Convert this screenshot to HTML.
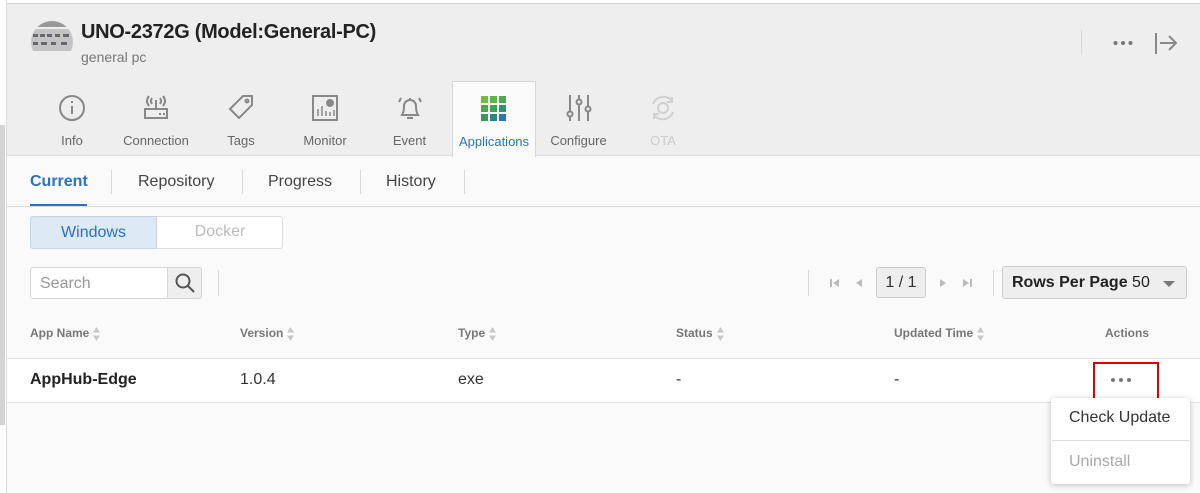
<!DOCTYPE html>
<html><head><meta charset="utf-8"><style>
*{box-sizing:border-box;margin:0;padding:0}
body{width:1200px;height:493px;overflow:hidden;font-family:"Liberation Sans",Arial,sans-serif;background:#fafafa;position:relative;color:#333}
.abs{position:absolute}
.left{left:0;top:0;width:7px;height:493px;background:#fff;border-right:1px solid #ddd}
.left .g{position:absolute;left:0;top:125px;width:5px;height:300px;background:#d4d4d4}
.top{left:0;top:0;width:1200px;height:4px;background:#fff;border-bottom:1px solid #d6d6d6}
.hdr{left:7px;top:4px;width:1193px;height:152px;background:#eeeeee;border-bottom:1px solid #dcdcdc}
.avatar{left:31px;top:21px;width:42px;height:42px;border-radius:50%;background:#fff;overflow:hidden}
.title{left:81px;top:21px;font-size:20px;font-weight:bold;color:#222;letter-spacing:-0.3px}
.sub{left:81px;top:49px;font-size:14px;color:#777}
.tab{top:81px;height:75px;text-align:center;font-size:13px;color:#666}
.tab svg{position:absolute;left:50%;top:13px;transform:translateX(-50%)}
.tab span{position:absolute;left:0;right:0;top:52px}
.tab.act{background:#fafafa;border:1px solid #d6d6d6;border-bottom:none;color:#2a72c2;height:76px}
.st{top:157px;font-size:16px;color:#444}
.sep{background:#d8d8d8;width:1px}
.srt{display:inline-block;vertical-align:middle;margin-left:3px}
</style></head><body>
<div class="abs top"></div>
<div class="abs left"><div class="g"></div></div>
<div class="abs hdr"></div>
<div class="abs avatar"><svg width="42" height="42"><rect x="0" y="0" width="42" height="42" fill="#eee"/><rect x="0" y="8" width="42" height="22" fill="#c4c4c4"/><g fill="#667"><rect x="2" y="13" width="5" height="3"/><rect x="9" y="13" width="5" height="3"/><rect x="16" y="13" width="5" height="3"/><rect x="24" y="13" width="5" height="3"/><rect x="32" y="13" width="6" height="3"/><rect x="2" y="21" width="5" height="3"/><rect x="10" y="21" width="6" height="3"/><rect x="20" y="21" width="5" height="3"/><rect x="30" y="21" width="6" height="3"/></g><rect x="0" y="0" width="42" height="6" fill="#999"/></svg></div>
<div class="abs title">UNO-2372G (Model:General-PC)</div>
<div class="abs sub">general pc</div>
<div class="abs sep" style="left:1081px;top:30px;height:25px"></div>
<svg class="abs" style="left:1113px;top:40px" width="20" height="6" fill="#777"><circle cx="2.5" cy="3" r="2"/><circle cx="10" cy="3" r="2"/><circle cx="17.5" cy="3" r="2"/></svg>
<svg class="abs" style="left:1154px;top:32px" width="24" height="24" fill="none" stroke="#888" stroke-width="2"><path d="M2 1v21M6 11h16M15 4l7 7-7 7"/></svg>

<div class="abs tab" style="left:31px;width:82px"><svg width="28" height="28" fill="none" stroke="#888" stroke-width="2"><circle cx="14" cy="14" r="12"/><path d="M14 12v8M14 7v2"/></svg><span>Info</span></div>
<div class="abs tab" style="left:113px;width:86px"><svg width="28" height="28" fill="none" stroke="#888" stroke-width="2"><path d="M3 15h22v9H3zM14 15V6M10 4q-2 3 0 6M18 4q2 3 0 6M7 2q-4 5 0 10M21 2q4 5 0 10"/><path d="M17 20h2M21 20h2" /></svg><span>Connection</span></div>
<div class="abs tab" style="left:199px;width:84px"><svg width="28" height="28" fill="none" stroke="#888" stroke-width="2"><path d="M3 15L16 2h9v9L12 24z"/><circle cx="20" cy="7" r="1.5"/></svg><span>Tags</span></div>
<div class="abs tab" style="left:283px;width:84px"><svg width="28" height="28" fill="none" stroke="#888" stroke-width="2"><rect x="2" y="2" width="24" height="24"/><path d="M7 22v-7M11 22v-10M15 22v-5M19 22v-4M23 22v-6" stroke-width="1.5"/><circle cx="19" cy="9" r="3" fill="#888"/></svg><span>Monitor</span></div>
<div class="abs tab" style="left:367px;width:85px"><svg width="28" height="28" fill="none" stroke="#888" stroke-width="2"><path d="M6 21q2-3 2-9a6 6 0 0112 0q0 6 2 9zM11 24h6M5 4L3 8M23 4l2 4M14 4v2"/></svg><span>Event</span></div>
<div class="abs tab act" style="left:452px;width:84px"><svg width="28" height="28"><g><rect x="1" y="1" width="7" height="7" fill="#6cbf3f"/><rect x="10" y="1" width="7" height="7" fill="#5db547"/><rect x="19" y="1" width="7" height="7" fill="#4ca94e"/><rect x="1" y="10" width="7" height="7" fill="#48ac4a"/><rect x="10" y="10" width="7" height="7" fill="#3fa05a"/><rect x="19" y="10" width="7" height="7" fill="#2f9270"/><rect x="1" y="19" width="7" height="7" fill="#3a9a5e"/><rect x="10" y="19" width="7" height="7" fill="#2b8a80"/><rect x="19" y="19" width="7" height="7" fill="#2a78b0"/></g></svg><span>Applications</span></div>
<div class="abs tab" style="left:536px;width:85px"><svg width="28" height="28" fill="none" stroke="#888" stroke-width="2"><path d="M5 1v26M14 1v26M23 1v26"/><circle cx="5" cy="20" r="2.5" fill="#eee"/><circle cx="14" cy="8" r="2.5" fill="#eee"/><circle cx="23" cy="15" r="2.5" fill="#eee"/></svg><span>Configure</span></div>
<div class="abs tab" style="left:621px;width:84px;color:#ccc"><svg width="28" height="28" fill="none" stroke="#d0d0d0" stroke-width="2"><circle cx="14" cy="14" r="5"/><path d="M4 10a11 11 0 0119-3M24 18a11 11 0 01-19 3M23 3v5h-5M5 25v-5h5"/></svg><span>OTA</span></div>

<div class="abs" style="left:7px;top:206px;width:1193px;height:1px;background:#dcdcdc"></div>
<div class="abs st" style="left:30px;top:173px;color:#2a72c2;font-weight:bold">Current</div>
<div class="abs" style="left:30px;top:204px;width:57px;height:2px;background:#2a72c2"></div>
<div class="abs sep" style="left:111px;top:170px;height:24px"></div>
<div class="abs st" style="left:138px;top:173px">Repository</div>
<div class="abs sep" style="left:242px;top:170px;height:24px"></div>
<div class="abs st" style="left:268px;top:173px">Progress</div>
<div class="abs sep" style="left:360px;top:170px;height:24px"></div>
<div class="abs st" style="left:386px;top:173px">History</div>
<div class="abs sep" style="left:464px;top:170px;height:24px"></div>

<div class="abs" style="left:30px;top:216px;width:253px;height:33px;border:1px solid #ddd;border-radius:3px;background:#fff"></div>
<div class="abs" style="left:30px;top:216px;width:127px;height:33px;border:1px solid #c8d4e0;border-radius:3px 0 0 3px;background:#dde9f5;color:#2a72c2;font-size:16px;text-align:center;line-height:31px">Windows</div>
<div class="abs" style="left:157px;top:216px;width:126px;height:33px;color:#bbb;font-size:16px;text-align:center;line-height:31px">Docker</div>

<div class="abs" style="left:30px;top:267px;width:172px;height:32px;border:1px solid #d6d6d6;border-radius:3px;background:#fff"></div>
<div class="abs" style="left:40px;top:275px;font-size:16px;color:#999">Search</div>
<div class="abs" style="left:167px;top:267px;width:35px;height:32px;border:1px solid #d6d6d6;border-radius:0 3px 3px 0;background:#eee"></div>
<svg class="abs" style="left:174px;top:272px" width="22" height="22" fill="none" stroke="#555" stroke-width="2"><circle cx="9" cy="9" r="6.5"/><path d="M14 14l6 6"/></svg>
<div class="abs sep" style="left:218px;top:270px;height:26px"></div>

<div class="abs sep" style="left:808px;top:270px;height:26px"></div>
<svg class="abs" style="left:830px;top:278px" width="10" height="10" fill="#bbb"><rect x="0" y="1" width="2" height="8"/><path d="M9 1v8L3 5z"/></svg>
<svg class="abs" style="left:855px;top:278px" width="8" height="10" fill="#bbb"><path d="M7 1v8L1 5z"/></svg>
<div class="abs" style="left:876px;top:267px;width:50px;height:31px;border:1px solid #ccc;border-radius:3px;background:#eee;font-size:16px;text-align:center;line-height:29px;color:#333">1 / 1</div>
<svg class="abs" style="left:939px;top:278px" width="8" height="10" fill="#bbb"><path d="M1 1v8l6-4z"/></svg>
<svg class="abs" style="left:962px;top:278px" width="10" height="10" fill="#bbb"><path d="M1 1v8l6-4z"/><rect x="8" y="1" width="2" height="8"/></svg>
<div class="abs sep" style="left:993px;top:270px;height:26px"></div>
<div class="abs" style="left:1002px;top:266px;width:185px;height:33px;border:1px solid #ccc;border-radius:3px;background:#eee;font-size:16px;line-height:31px;padding-left:9px;color:#222"><b>Rows Per Page</b> 50</div>
<div class="abs" style="left:1163px;top:281px;width:0;height:0;border-left:6px solid transparent;border-right:6px solid transparent;border-top:6px solid #777"></div>

<div class="abs" style="left:7px;top:358px;width:1193px;height:45px;background:#fff;border-top:1px solid #e2e2e2;border-bottom:1px solid #e2e2e2"></div>
<div class="abs" style="left:0;top:326px;width:1200px;font-size:12px;font-weight:bold;color:#777">
<span class="abs" style="left:30px;white-space:nowrap">App Name<svg class="srt" width="9" height="16" fill="#c8c8c8"><path d="M4.5 1L8 6.5H1zM4.5 15L8 9.5H1z"/></svg></span>
<span class="abs" style="left:240px;white-space:nowrap">Version<svg class="srt" width="9" height="16" fill="#c8c8c8"><path d="M4.5 1L8 6.5H1zM4.5 15L8 9.5H1z"/></svg></span>
<span class="abs" style="left:458px;white-space:nowrap">Type<svg class="srt" width="9" height="16" fill="#c8c8c8"><path d="M4.5 1L8 6.5H1zM4.5 15L8 9.5H1z"/></svg></span>
<span class="abs" style="left:676px;white-space:nowrap">Status<svg class="srt" width="9" height="16" fill="#c8c8c8"><path d="M4.5 1L8 6.5H1zM4.5 15L8 9.5H1z"/></svg></span>
<span class="abs" style="left:894px;white-space:nowrap">Updated Time<svg class="srt" width="9" height="16" fill="#c8c8c8"><path d="M4.5 1L8 6.5H1zM4.5 15L8 9.5H1z"/></svg></span>
<span class="abs" style="left:1105px">Actions</span>
</div>
<div class="abs" style="left:0;top:371px;width:1200px;font-size:16px;color:#333">
<span class="abs" style="left:30px;font-weight:bold;color:#222">AppHub-Edge</span>
<span class="abs" style="left:240px">1.0.4</span>
<span class="abs" style="left:458px">exe</span>
<span class="abs" style="left:676px">-</span>
<span class="abs" style="left:894px">-</span>
</div>
<div class="abs" style="left:1093px;top:362px;width:66px;height:40px;border:2px solid #e00000"></div>
<svg class="abs" style="left:1110px;top:377px" width="22" height="6" fill="#777"><circle cx="3" cy="3" r="2"/><circle cx="11" cy="3" r="2"/><circle cx="19" cy="3" r="2"/></svg>
<div class="abs" style="left:1051px;top:398px;width:139px;height:86px;background:#fff;border-radius:3px;box-shadow:0 1px 6px rgba(0,0,0,.25)"></div>
<div class="abs" style="left:1069px;top:409px;font-size:16px;color:#333">Check Update</div>
<div class="abs" style="left:1052px;top:440px;width:137px;height:1px;background:#ddd"></div>
<div class="abs" style="left:1069px;top:453px;font-size:16px;color:#aaa">Uninstall</div>
</body></html>
